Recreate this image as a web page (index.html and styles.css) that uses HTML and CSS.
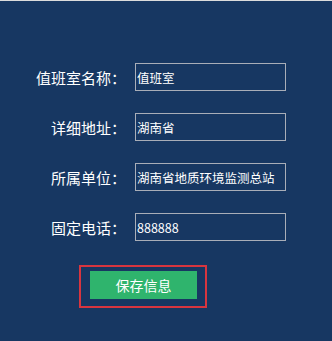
FILE: index.html
```html
<!DOCTYPE html>
<html lang="zh-CN">
<head>
    <meta charset="UTF-8" />
    <meta name="viewport" content="width=device-width, initial-scale=1.0" />
    <title>值班室信息</title>
    <link rel="stylesheet" href="styles.css">
</head>
<body>
    <form class="duty-form" onsubmit="return false;">
        <div class="form-row">
            <label class="form-label" for="roomName">值班室名称：</label>
            <input class="form-input" type="text" id="roomName" value="值班室" />
        </div>
        <div class="form-row">
            <label class="form-label" for="address">详细地址：</label>
            <input class="form-input" type="text" id="address" value="湖南省" />
        </div>
        <div class="form-row">
            <label class="form-label" for="unit">所属单位：</label>
            <input class="form-input" type="text" id="unit" value="湖南省地质环境监测总站" />
        </div>
        <div class="form-row">
            <label class="form-label" for="phone">固定电话：</label>
            <input class="form-input" type="text" id="phone" value="888888" />
        </div>
        <div class="btn-wrap">
            <button type="submit" class="save-btn">保存信息</button>
        </div>
    </form>
</body>
</html>
```

FILE: styles.css
```css
html, body {
    height: 100%;
}
body {
    margin: 0;
    background-color: #173762;
    border-top: 1px solid #dcdcdc;
    box-sizing: border-box;
    font-family: "Noto Sans CJK SC", "Microsoft YaHei", sans-serif;
    color: #fff;
}
.duty-form {
    padding-top: 62px;
}
.form-row {
    display: flex;
    align-items: center;
    height: 28px;
    margin-bottom: 22px;
}
.form-label {
    width: 126px;
    text-align: right;
    font-size: 15px;
    margin-right: 9px;
    white-space: nowrap;
}
.form-input {
    width: 151px;
    height: 28px;
    box-sizing: border-box;
    padding: 0 0 0 1px;
    border: 1px solid #a9aeb8;
    background: transparent;
    color: #fff;
    font-family: "Noto Sans CJK SC", "Microsoft YaHei", sans-serif;
    font-size: 12.5px;
    outline: none;
}
.btn-wrap {
    margin: 24px 0 0 79px;
    width: 128px;
    height: 43px;
    box-sizing: border-box;
    border: 2px solid #d8353f;
    padding: 4px 8px 0 9px;
}
.save-btn {
    display: block;
    width: 107px;
    height: 28px;
    border: none;
    background-color: #2fb46d;
    color: #fff;
    font-family: "Noto Sans CJK SC", "Microsoft YaHei", sans-serif;
    font-size: 14px;
    cursor: pointer;
    padding: 0;
}
```
